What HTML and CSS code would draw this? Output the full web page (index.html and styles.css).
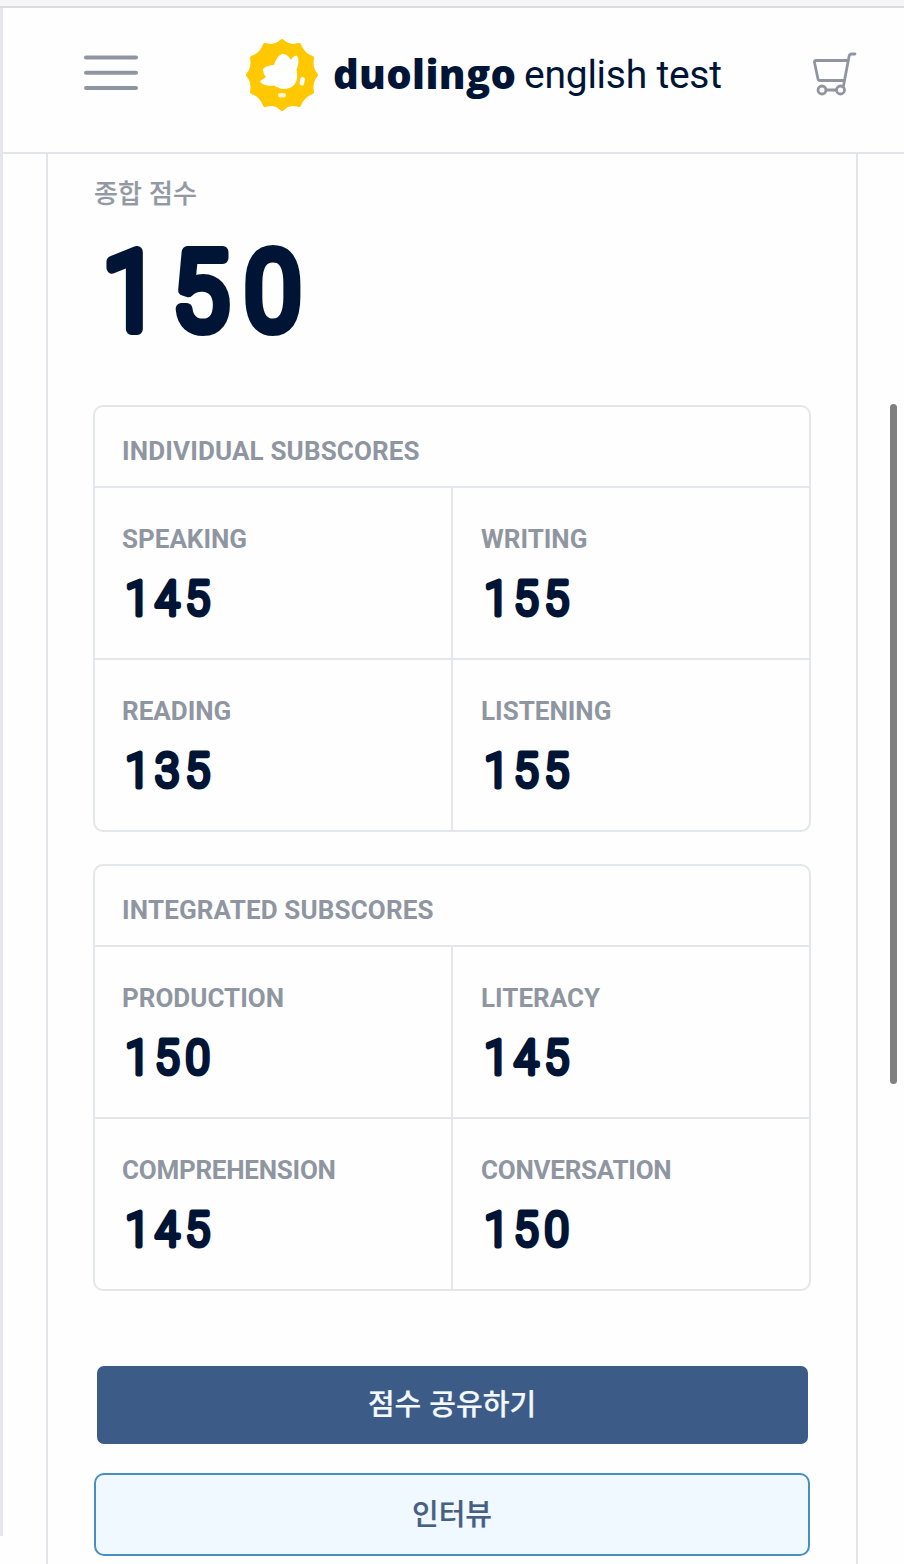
FILE: index.html
```
<!DOCTYPE html>
<html lang="ko">

<head>
    <meta charset="utf-8">
    <title>Duolingo English Test</title>
    <link rel="stylesheet" href="styles.css">
</head>

<body>

    <div class="topbar"></div>

    <header class="header">
        <svg class="menu" width="54" height="37" viewBox="0 0 54 37">
            <path d="M2 2.500H52M2 17.800H52M2 33H52" />
        </svg>

        <svg class="logo" width="490" height="90" viewBox="240 30 490 90">
            <path class="seal" d="M282 41 Q289 48 299 45 Q303 55 312 58 Q310 68 316 75 Q310 82 312 92 Q303 95 299 105 Q289 102 282 109 Q275 102 265 105 Q261 95 252 92 Q254 82 248 75 Q254 68 252 58 Q261 55 265 45 Q275 48 282 41Z" />
            <path class="bird" d="M263 69 C266 66 270 65 274 65 C276 59 279 54 283 54 C287 54 289 57 291 60 C292 58 294 55 297 56 C299 58 299 64 296.500 70 C299 80 295 89 284 89 C280 89 277 87 274 85.500 C269 86.500 261 85 260 81 L266 77 C264 75 263 72 263 69Z" />
            <rect class="bird" x="300" y="77" width="4.500" height="8.500" rx="2" transform="rotate(10 302 81)" />
            <rect class="bird spot" x="278" y="93" width="8" height="4.500" rx="2" />
            <text class="brand" x="333" y="89" textLength="183">duolingo</text>
            <text class="product" x="524" y="88" textLength="198">english test</text>
        </svg>

        <svg class="cart" width="46" height="44" viewBox="812 52 46 44">
            <path d="M848.500 60.500H816Q814 60.500 814.500 62.500L818 79Q818.300 80.500 820 80.500H844M855 54H852Q849.500 54 849 56.500L843.500 86M826 90H836" />
            <circle cx="822" cy="90" r="4" />
            <circle cx="840.500" cy="90" r="4" />
        </svg>
    </header>

    <main class="card">
        <div class="total-label">종합 점수</div>
        <svg class="total" width="240" height="134" viewBox="0 0 240 134">
            <text x="3.500 78.500 156" y="105">150</text>
        </svg>

        <section class="scores">
            <h2>INDIVIDUAL SUBSCORES</h2>
            <div class="grid">
                <div class="cell"><h3>SPEAKING</h3><svg class="num"><text x="3.500 36 69" y="46">145</text></svg></div>
                <div class="cell"><h3>WRITING</h3><svg class="num"><text x="3.500 36 69" y="46">155</text></svg></div>
                <div class="cell"><h3>READING</h3><svg class="num"><text x="3.500 36 69" y="46">135</text></svg></div>
                <div class="cell"><h3>LISTENING</h3><svg class="num"><text x="3.500 36 69" y="46">155</text></svg></div>
            </div>
        </section>

        <section class="scores">
            <h2>INTEGRATED SUBSCORES</h2>
            <div class="grid">
                <div class="cell"><h3>PRODUCTION</h3><svg class="num"><text x="3.500 36 69" y="46">150</text></svg></div>
                <div class="cell"><h3>LITERACY</h3><svg class="num"><text x="3.500 36 69" y="46">145</text></svg></div>
                <div class="cell"><h3 class="long">COMPREHENSION</h3><svg class="num"><text x="3.500 36 69" y="46">145</text></svg></div>
                <div class="cell"><h3 class="long">CONVERSATION</h3><svg class="num"><text x="3.500 36 69" y="46">150</text></svg></div>
            </div>
        </section>

        <div class="actions">
            <button class="share" type="button">점수 공유하기</button>
            <button class="interview" type="button">인터뷰</button>
        </div>
    </main>

    <div class="edge"></div>
    <div class="scrollbar"></div>

</body>

</html>
```
FILE: styles.css
```
* {
    box-sizing: border-box;
}

body {
    position: relative;
    margin: 0;
    height: 1564px;
    overflow: hidden;
    background: #fefefe;
    color: #001435;
    font-family: Roboto, "Noto Sans CJK KR", sans-serif;
}

svg {
    display: block;
}

.topbar {
    height: 8px;
    background: #f5f5f6;
    border-bottom: 2px solid #dcdce0;
}

/* header */
.header {
    display: flex;
    align-items: flex-start;
    height: 146px;
    padding: 22px 46px 0 84px;
    border-bottom: 2px solid #e3e5ea;
}

.menu {
    margin-top: 25px;
}

.menu path {
    stroke: #8f96a1;
    stroke-width: 4;
    stroke-linecap: round;
}

.logo {
    margin-left: 102px;
}

.seal {
    fill: #ffc800;
    stroke: #ffc800;
    stroke-width: 4;
    stroke-linejoin: round;
}

.bird {
    fill: #ffffff;
}

.spot {
    fill: #fff6c4;
}

.brand {
    font-family: "Open Sans", sans-serif;
    font-size: 40px;
    font-weight: 800;
    fill: #001435;
}

.product {
    font-size: 39px;
    fill: #001435;
}

.cart {
    margin-top: 22px;
    margin-left: 82px;
    fill: none;
    stroke: #8f96a1;
    stroke-width: 2.8;
    stroke-linecap: round;
}

/* result card */
.card {
    width: 812px;
    height: 1410px;
    margin-left: 46px;
    padding: 19px 45px 0;
    border: solid #e3e4e8;
    border-width: 0 2px;
}

.total-label {
    height: 38px;
    margin-left: 1px;
    line-height: 38px;
    font-family: "Noto Sans CJK KR", sans-serif;
    font-size: 26px;
    font-weight: 500;
    color: #9299a3;
    -webkit-text-stroke: 0.2px #9299a3;
}

.total {
    margin: 13px 0 47px 7px;
}

/* thin digits with a thick round stroke give soft ends */
.total text {
    font-size: 108px;
    font-weight: 300;
    fill: #001435;
    stroke: #001435;
    stroke-width: 12;
    stroke-linejoin: round;
    transform: scaleX(0.93);
}

.scores {
    width: 718px;
    margin-bottom: 32px;
    border: 2px solid #e3e6eb;
    border-radius: 10px;
}

h2 {
    height: 81px;
    margin: 0;
    padding: 8px 0 0 27px;
    border-bottom: 2px solid #e3e6eb;
    line-height: 72px;
    font-size: 26px;
    font-weight: 700;
    letter-spacing: 0.15px;
    color: #8f96a1;
}

.grid {
    display: grid;
    grid-template-columns: 358px 356px;
}

.cell {
    height: 172px;
    padding: 37px 0 0 27px;
    border-right: 2px solid #e3e6eb;
    border-bottom: 2px solid #e3e6eb;
}

.cell:nth-child(even) {
    padding-left: 28px;
    border-right: 0;
}

.cell:nth-child(n+3) {
    height: 170px;
    border-bottom: 0;
}

h3 {
    margin: 0;
    line-height: 28px;
    font-size: 26px;
    font-weight: 700;
    color: #8f96a1;
}

h3.long {
    letter-spacing: -0.25px;
}

.num {
    width: 120px;
    height: 62px;
    margin-top: 16px;
}

.num text {
    font-size: 48px;
    font-weight: 300;
    fill: #001435;
    stroke: #001435;
    stroke-width: 5;
    stroke-linejoin: round;
    transform: scaleX(0.92);
}

/* buttons */
.actions {
    display: flex;
    flex-direction: column;
    align-items: center;
    gap: 29px;
    width: 718px;
    padding-top: 43px;
}

button {
    font-family: "Noto Sans CJK KR", sans-serif;
    font-size: 29px;
    font-weight: 500;
    line-height: 40px;
    -webkit-text-stroke: 0.2px currentColor;
}

.share {
    width: 711px;
    height: 78px;
    padding: 0 0 7px;
    border: 0;
    border-radius: 7px;
    background: #3c5c87;
    color: #f3f9ff;
}

.interview {
    width: 716px;
    height: 83px;
    padding: 0 0 6px;
    border: 2px solid #478fbf;
    border-radius: 10px;
    background: #f0f9ff;
    color: #456083;
}

/* window edge and scroll thumb lie over the page */
.edge {
    position: absolute;
    left: 0;
    top: 8px;
    width: 3px;
    height: 1528px;
    background: #e5e6ec;
}

.scrollbar {
    position: absolute;
    left: 890px;
    top: 404px;
    width: 7px;
    height: 680px;
    border-radius: 4px;
    background: #808080;
}
```
